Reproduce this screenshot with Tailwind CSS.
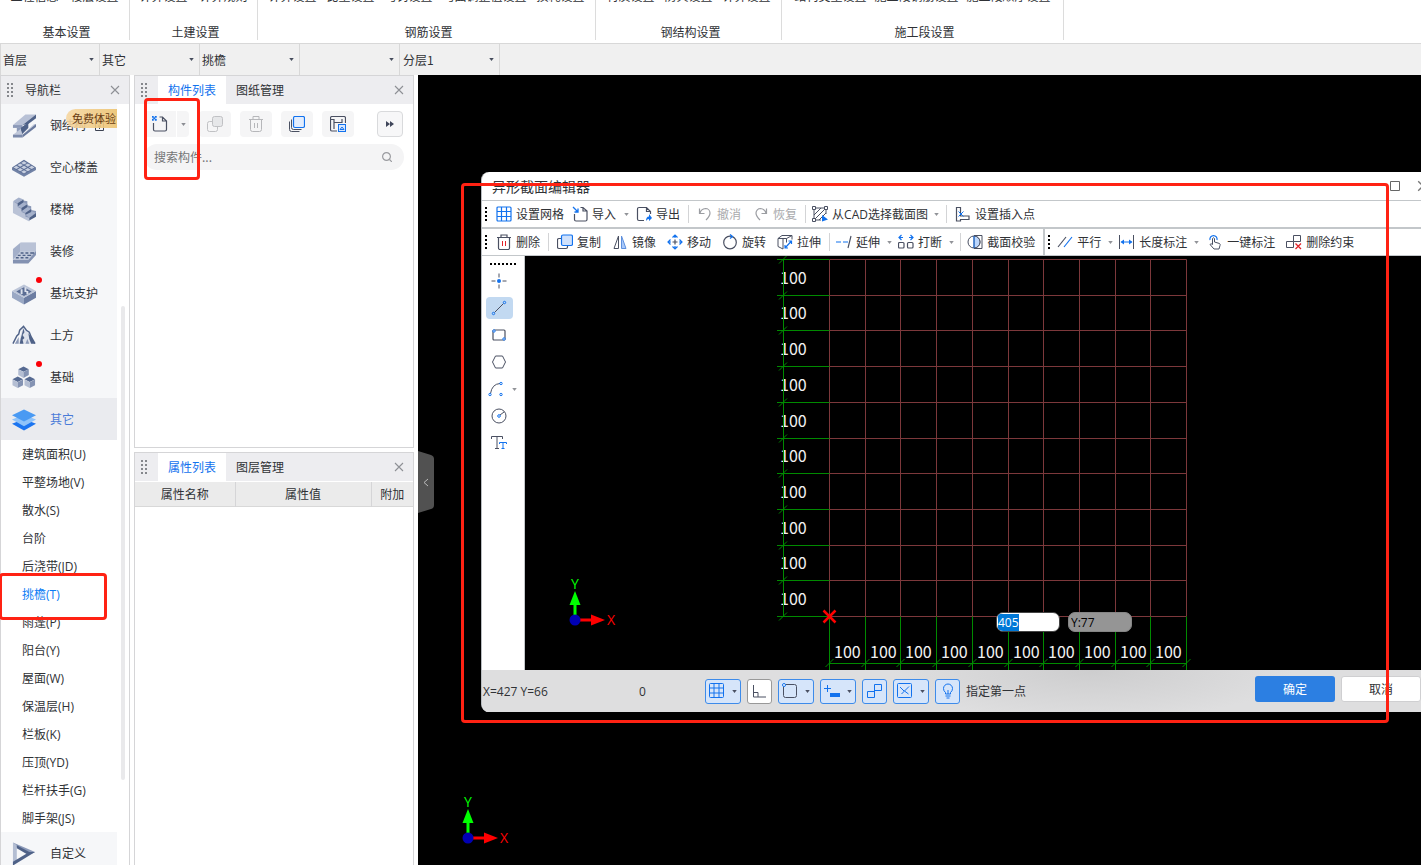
<!DOCTYPE html>
<html lang="zh-CN">
<head>
<meta charset="utf-8">
<title>异形截面编辑器</title>
<script src="https://cdn.jsdelivr.net/npm/@tailwindcss/browser@4"></script>
</head>
<body class="h-screen overflow-hidden bg-white font-['Noto_Sans_CJK_SC',sans-serif] text-xs text-[#303236]">
<svg class="hidden">
  <symbol id="caret" viewBox="0 0 6 4"><path d="M0 0h6L3 4z" fill="currentColor"/></symbol>
  <symbol id="close" viewBox="0 0 10 10"><path d="M1 1l8 8M9 1l-8 8" stroke="currentColor" stroke-width="1.1"/></symbol>
  <symbol id="grip" viewBox="0 0 6 14"><path d="M0 0h2v2H0zM4 0h2v2H4zM0 4h2v2H0zM4 4h2v2H4zM0 8h2v2H0zM4 8h2v2H4zM0 12h2v2H0zM4 12h2v2H4z" fill="#85878c"/></symbol>
  <symbol id="vdots" viewBox="0 0 2 14"><path d="M0 0h2v2H0zM0 4h2v2H0zM0 8h2v2H0zM0 12h2v2H0z" fill="#000"/></symbol>
</svg>

<div class="relative flex h-full flex-col">
  <!-- ribbon -->
  <header class="flex h-[43px] shrink-0 overflow-hidden">
    <section class="flex h-10 w-[130px] flex-col justify-between border-r border-[#dcdcdc]"><div class="-mt-3 flex justify-center gap-3 leading-4 whitespace-nowrap"><span>工程信息</span><span>楼层设置</span></div><h2 class="pl-1 text-center leading-4">基本设置</h2></section>
    <section class="flex h-10 w-[128px] flex-col justify-between border-r border-[#dcdcdc]"><div class="-mt-3 flex justify-center gap-3 leading-4 whitespace-nowrap"><span>计算设置</span><span>计算规则</span></div><h2 class="pl-1 text-center leading-4">土建设置</h2></section>
    <section class="flex h-10 w-[338px] flex-col justify-between border-r border-[#dcdcdc]"><div class="-mt-3 flex justify-center gap-2.5 leading-4 whitespace-nowrap"><span>计算设置</span><span>比重设置</span><span>弯钩设置</span><span>弯曲调整值设置</span><span>损耗设置</span></div><h2 class="pl-1 text-center leading-4">钢筋设置</h2></section>
    <section class="flex h-10 w-[186px] flex-col justify-between border-r border-[#dcdcdc]"><div class="-mt-3 flex justify-center gap-2.5 leading-4 whitespace-nowrap"><span>材质设置</span><span>防火设置</span><span>计算设置</span></div><h2 class="pl-1 text-center leading-4">钢结构设置</h2></section>
    <section class="flex h-10 w-[282px] flex-col justify-between border-r border-[#dcdcdc]"><div class="-mt-3 flex justify-center gap-2 leading-4 whitespace-nowrap"><span>结构类型设置</span><span>施工段钢筋设置</span><span>施工段顺序设置</span></div><h2 class="pl-1 text-center leading-4">施工段设置</h2></section>
  </header>

  <!-- context selectors -->
  <div class="flex h-8 shrink-0 border-t border-l border-[#d8d8d8] bg-[#f0f0f0]">
    <div class="relative flex w-[99px] items-center border-r border-[#d8d8d8]"><select aria-label="楼层" class="h-full w-full appearance-none pl-0.5"><option>首层</option></select><svg class="pointer-events-none absolute right-[5px] h-[3px] w-[5px] text-[#444b5c]"><use href="#caret"/></svg></div>
    <div class="relative flex w-[100px] items-center border-r border-[#d8d8d8]"><select aria-label="构件类别" class="h-full w-full appearance-none pl-0.5"><option>其它</option></select><svg class="pointer-events-none absolute right-[5px] h-[3px] w-[5px] text-[#444b5c]"><use href="#caret"/></svg></div>
    <div class="relative flex w-[100px] items-center border-r border-[#d8d8d8]"><select aria-label="构件类型" class="h-full w-full appearance-none pl-0.5"><option>挑檐</option></select><svg class="pointer-events-none absolute right-[5px] h-[3px] w-[5px] text-[#444b5c]"><use href="#caret"/></svg></div>
    <div class="relative flex w-[100px] items-center border-r border-[#d8d8d8]"><select aria-label="构件" class="h-full w-full appearance-none pl-0.5"><option></option></select><svg class="pointer-events-none absolute right-[5px] h-[3px] w-[5px] text-[#444b5c]"><use href="#caret"/></svg></div>
    <div class="relative flex w-[100px] items-center border-r border-[#d8d8d8]"><select aria-label="分层" class="h-full w-full appearance-none pl-[3px]"><option>分层1</option></select><svg class="pointer-events-none absolute right-[5px] h-[3px] w-[5px] text-[#444b5c]"><use href="#caret"/></svg></div>
  </div>

  <div class="flex min-h-0 flex-1">
    <!-- navigation -->
    <nav class="mr-1 flex w-[130px] shrink-0 flex-col border-x border-t border-[#d5d5d7]">
      <div class="flex h-7 shrink-0 items-center bg-[#ededf0] pl-1.5"><svg class="h-3.5 w-1.5"><use href="#grip"/></svg><h2 class="ml-3 flex-1">导航栏</h2><button aria-label="关闭导航栏" class="mr-[9px] text-[#8e9095]"><svg class="h-2.5 w-2.5"><use href="#close"/></svg></button></div>
      <div class="flex min-h-0 flex-1 overflow-hidden">
        <div class="w-[116px] shrink-0">
          <a href="#" class="relative flex h-[42px] items-center gap-3.5 bg-[#f6f7f9] pl-[11px]">
            <svg class="mt-0.5 h-7 w-6" viewBox="0 0 25 28"><path d="M1 13L14 2h11L11 13z" fill="#b8c1d6"/><path d="M1 13h10v3H1z" fill="#8b99b8"/><path d="M11 13L25 2v4l-8 6z" fill="#4f6288"/><path d="M5 16h4v6H5z" fill="#8b99b8"/><path d="M9 16l8-6v6l-7 7z" fill="#4f6288"/><path d="M1 23L9 17l2 6 12-11h2L11 23z" fill="#c0c8da"/><path d="M1 23h10v3H1z" fill="#7c8bac"/><path d="M11 23L25 12v3L11 26z" fill="#6a7a9e"/></svg><span>钢结构</span>
            <svg class="absolute top-[14px] left-[93px] h-3.5 w-3" viewBox="0 0 12 14" fill="none" stroke="#3c4252"><path d="M1.500 4.500h8v8h-8zM3.500 4V2h4v2M5.500 8v3"/><circle cx="5.500" cy="8" r="1"/></svg>
            <span class="absolute top-[5px] left-[65px] h-[19px] w-[51px] overflow-hidden rounded-l-full bg-linear-to-r from-[#f6d7a2]/90 to-[#edc36f]/90 pl-1.5 text-[11px] leading-[19px] whitespace-nowrap text-[#683b12]">免费体验</span>
          </a>
          <a href="#" class="flex h-[42px] items-center gap-3.5 bg-[#f6f7f9] pl-[11px]">
            <svg class="mt-0.5 h-7 w-6" viewBox="0 0 25 28"><path d="M12.500 7L25 14v2l-12.500 7L0 16v-2z" fill="#7182a6"/><path d="M12.500 5.500L25 13.500l-12.500 7L0 13.500z" fill="#5c6e96"/><g fill="#c7cfdf"><path d="M12.500 7l3 1.700-3 1.700-3-1.700zM8.500 9.300l3 1.700-3 1.700-3-1.700zM16.500 9.300l3 1.700-3 1.700-3-1.700zM4.500 11.700l3 1.700-3 1.700-3-1.700zM12.500 11.700l3 1.700-3 1.700-3-1.700zM20.500 11.700l3 1.700-3 1.700-3-1.700zM8.500 14l3 1.700-3 1.700-3-1.700zM16.500 14l3 1.700-3 1.700-3-1.700zM12.500 16.300l3 1.700-3 1.700-3-1.700z"/></g></svg><span>空心楼盖</span></a>
          <a href="#" class="flex h-[42px] items-center gap-3.5 bg-[#f6f7f9] pl-[11px]">
            <svg class="mt-0.5 h-7 w-6" viewBox="0 0 25 28"><path d="M2 5l0 11 16 9V21l7-3v-3l-5-1v-4l-4-1V5l-4-1z" fill="#8b99b8"/><path d="M1 5l5 3v3l4 2v3l4 2v3l4 1v4L1 17z" fill="#b9c2d6"/><path d="M1 5l6-4 5 2-6 4zM6 10l6-4 4 2-6 4zM10 15l6-4 4 2-6 4zM14 19l6-4 5 2-7 5z" fill="#a5b1cb"/><path d="M6 7l6-4v3l-6 4zM10 12l6-4v3l-6 4zM14 17l6-4v3l-6 3zM18 22l7-5v4l-7 4z" fill="#4f6288"/></svg><span>楼梯</span></a>
          <a href="#" class="flex h-[42px] items-center gap-3.5 bg-[#f6f7f9] pl-[11px]">
            <svg class="mt-0.5 h-7 w-6" viewBox="0 0 25 28"><path d="M9 4h16v13H9z" fill="#b9c2d6"/><path d="M1 11L9 4v10l-8 8z" fill="#a3afc9"/><path d="M9 13h16L17 22H1z" fill="#c2cadb"/><path d="M1 22h16l8-9v4l-8 9H1z" fill="#8492b2"/><path d="M9 15h3M14 15h3M19 15h4M6 17.500h3M11 17.500h3M16 17.500h4M4 20h3M9 20h3M14 20h3" stroke="#4f6288" stroke-width="1.400"/></svg><span>装修</span></a>
          <a href="#" class="relative flex h-[42px] items-center gap-3.5 bg-[#f6f7f9] pl-[11px]">
            <svg class="mt-0.5 h-7 w-6" viewBox="0 0 25 28"><path d="M0 11l12.500 7v7L0 18z" fill="#9aa8c4"/><path d="M25 11l-12.500 7v7L25 18z" fill="#6c7da2"/><path d="M12.500 4L25 11l-12.500 7L0 11z" fill="#bcc5d8"/><path d="M12.500 7l8 4.500-8 4.500-8-4.500z" fill="#5b6d94"/><path d="M9 9h2v5H9zM13 7h2v5h-2zM15 11h2v3h-2z" fill="#dce1ec"/></svg><span>基坑支护</span><i class="absolute top-[5px] left-[35px] h-1.5 w-1.5 rounded-full bg-[#fb0007]"></i></a>
          <a href="#" class="flex h-[42px] items-center gap-3.5 bg-[#f6f7f9] pl-[11px]">
            <svg class="mt-0.5 h-7 w-6" viewBox="0 0 25 28"><path d="M11 5l4 3 8 14H7z" fill="#dfe3ec"/><path d="M1 22l4-8 2-2 1-4 4-4 3 4 3 2 2 5 4 7" fill="none" stroke="#4f6288" stroke-width="1.500"/><path d="M12 6l1 4-2 3 2 3-2 2 1 4H8l1-5zM17 11l3 4 4 7h-4l-2-5z" fill="#4f6288"/><path d="M3 22l4-7 0 7zM14 22l2-5 2 5z" fill="#8b99b8"/></svg><span>土方</span></a>
          <a href="#" class="relative flex h-[42px] items-center gap-3.5 bg-[#f6f7f9] pl-[11px]">
            <svg class="mt-0.5 h-7 w-6" viewBox="0 0 25 28"><g id="cube"><path d="M12 2l5.500 2.800L12 7.600 6.500 4.800z" fill="#566a92"/><path d="M6.500 5v6l5.500 3V7.800z" fill="#b4bed3"/><path d="M17.500 5v6L12 14V7.800z" fill="#8493b3"/></g><use href="#cube" x="-6" y="10.500"/><use href="#cube" x="6.500" y="10.500"/></svg><span>基础</span><i class="absolute top-[5px] left-[35px] h-1.5 w-1.5 rounded-full bg-[#fb0007]"></i></a>
          <a href="#" class="flex h-[42px] items-center gap-3.5 bg-[#eaebef] pl-[11px] text-[#4a7bd8]">
            <svg class="mt-0.5 h-7 w-6" viewBox="0 0 25 28"><path d="M0 18l12.500-5L25 18l-12.500 7z" fill="#1c75f0"/><path d="M0 13.500l12.500-5 12.500 5-12.500 7z" fill="#8fc3fa"/><path d="M12.500 3L25 9l-12.500 6.500L0 9z" fill="#4a9af3"/></svg><span>其它</span></a>
          <ul class="-mb-px pt-px pl-[21px] font-['Open_Sans','Noto_Sans_CJK_SC',sans-serif] leading-7 whitespace-nowrap">
            <li><a href="#">建筑面积(U)</a></li><li><a href="#">平整场地(V)</a></li><li><a href="#">散水(S)</a></li><li><a href="#">台阶</a></li><li><a href="#">后浇带(JD)</a></li><li><a href="#" class="text-[#0a7cf5]">挑檐(T)</a></li><li><a href="#">雨蓬(P)</a></li><li><a href="#">阳台(Y)</a></li><li><a href="#">屋面(W)</a></li><li><a href="#">保温层(H)</a></li><li><a href="#">栏板(K)</a></li><li><a href="#">压顶(YD)</a></li><li><a href="#">栏杆扶手(G)</a></li><li><a href="#">脚手架(JS)</a></li>
          </ul>
          <a href="#" class="flex h-[42px] items-center gap-3.5 bg-[#f6f7f9] pl-[11px]">
            <svg class="mt-0.5 h-7 w-6" viewBox="0 0 25 28"><path d="M1 2l23 10-4 2L5 7z" fill="#8b99b8"/><path d="M1 2l4 3v15l-4 6z" fill="#b4bed3"/><path d="M24 12L1 26v-4l17-10z" fill="#4f6288"/><path d="M5 5l13 7-1 3L5 8z" fill="#4f6288"/></svg><span>自定义</span></a>
        </div>
        <div class="mt-[202px] ml-1 h-[474px] w-1 rounded-full bg-[#e9e9eb]"></div>
      </div>
    </nav>

    <!-- component and property panels -->
    <aside class="mr-1 flex w-[280px] shrink-0 flex-col gap-1">
      <section class="h-[373px] shrink-0 border border-[#d5d5d7]">
        <div class="flex h-7 items-center bg-[#ededf0] pl-1.5"><svg class="h-3.5 w-1.5"><use href="#grip"/></svg><button class="ml-[11px] h-7 bg-white px-2.5 text-[#1272ee]">构件列表</button><button class="h-7 px-2.5">图纸管理</button><button aria-label="关闭构件列表" class="mr-[9px] ml-auto text-[#8e9095]"><svg class="h-2.5 w-2.5"><use href="#close"/></svg></button></div>
        <div class="flex h-10 items-center pr-2.5 pl-[9px]">
          <button aria-label="新建" class="flex h-[26px] w-8 items-center justify-center rounded-l bg-[#f5f5f6]"><svg class="h-4 w-4" viewBox="0 0 16 16" fill="none" stroke="#4a5062"><path d="M1.500 7v6.500A1.500 1.500 0 003 15h10a1.500 1.500 0 001.500-1.500V5l-4-4H7.500M10.500 1v4h4" stroke-width="1.200"/><path d="M0 0h1.500v1.500H0zM3 0h1.500v1.500H3zM1.500 1.500H3V3H1.500zM0 3h1.500v1.500H0zM3 3h1.500v1.500H3z" fill="#1272ee" stroke="#1272ee" stroke-width=".4"/></svg></button>
          <button aria-label="新建选项" class="ml-px flex h-[26px] w-3 items-center justify-center rounded-r bg-[#f5f5f6] text-[#8b8d93]"><svg class="h-[3px] w-[5px]"><use href="#caret"/></svg></button>
          <button aria-label="复制" class="ml-2.5 flex h-[26px] w-8 items-center justify-center rounded bg-[#f5f5f6]"><svg class="h-4 w-4" viewBox="0 0 16 16" stroke="#c0c1c4"><rect x=".5" y="5.500" width="10" height="10" rx="2" fill="none"/><rect x="5.500" y=".5" width="10" height="10" rx="2" fill="#e6e7e9"/></svg></button>
          <button aria-label="删除" class="ml-[9px] flex h-[26px] w-8 items-center justify-center rounded bg-[#f5f5f6]"><svg class="h-4 w-4" viewBox="0 0 16 16" fill="none" stroke="#b6b7ba"><path d="M1 3.500h14M5 3.500v-3h6v3M2.500 3.500v10a2 2 0 002 2h7a2 2 0 002-2v-10M6.500 7v5M9.500 7v5"/></svg></button>
          <button aria-label="层间复制" class="ml-[9px] flex h-[26px] w-8 items-center justify-center rounded bg-[#f5f5f6]"><svg class="h-4 w-4" viewBox="0 0 16 16" fill="none" stroke="#4a5062"><path d="M.5 5.500v8a2 2 0 002 2h8M2.500 3.500v8a2 2 0 002 2h8"/><rect x="4.500" y=".5" width="11" height="11" rx="1.500" fill="#e3edfd" stroke="#1272ee" stroke-width="1.200"/></svg></button>
          <button aria-label="存档" class="ml-[9px] flex h-[26px] w-8 items-center justify-center rounded bg-[#f5f5f6]"><svg class="h-4 w-4" viewBox="0 0 16 16" fill="none" stroke="#4a5062"><path d="M7 15H2A1.500 1.500 0 01.5 13.500V2A1.500 1.500 0 012 .5h12A1.500 1.500 0 0115.500 2v5M4 3v10M12 3v4M4 6.500h8M1 3.500h3" stroke-width="1.200"/><rect x="8.500" y="8.500" width="7" height="7" stroke="#1272ee" fill="#d9e7fd"/><path d="M10 13.500l2-2.500 2 2.500z" stroke="#1272ee"/></svg></button>
          <button aria-label="更多" class="ml-auto flex h-[26px] w-[26px] items-center justify-center rounded border border-[#d9dadc] bg-[#f7f7f8]"><svg class="h-2 w-2" viewBox="0 0 8 8" fill="#40465a"><path d="M0 1l4 3-4 3zM4 1l4 3-4 3z"/></svg></button>
        </div>
        <label class="mr-[9px] ml-[9px] flex h-[26px] items-center rounded-full bg-[#f4f4f5] pr-3 pl-2.5"><input type="text" aria-label="搜索构件" placeholder="搜索构件..." class="min-w-0 flex-1 outline-none placeholder:text-[#757575]"><svg class="h-2.5 w-2.5" viewBox="0 0 10 10" fill="none" stroke="#9b9ca0" stroke-width="1.200"><circle cx="4.500" cy="4.500" r="3.900"/><path d="M7.500 7.500L10 10"/></svg></label>
      </section>
      <section class="flex-1 border border-b-0 border-[#d5d5d7]">
        <div class="flex h-7 items-center bg-[#ededf0] pl-1.5"><svg class="h-3.5 w-1.5"><use href="#grip"/></svg><button class="ml-[11px] h-7 bg-white px-2.5 text-[#1272ee]">属性列表</button><button class="h-7 px-2.5">图层管理</button><button aria-label="关闭属性列表" class="mr-[9px] ml-auto text-[#8e9095]"><svg class="h-2.5 w-2.5"><use href="#close"/></svg></button></div>
        <table class="mt-px w-full table-fixed border-collapse">
          <thead><tr class="h-6 border-b border-[#d8d8d8] bg-[#ebebeb]"><th class="w-[100px] border-r border-[#d5d5d7] font-normal">属性名称</th><th class="border-r border-[#d5d5d7] font-normal">属性值</th><th class="w-[42px] font-normal">附加</th></tr></thead>
        </table>
      </section>
    </aside>

    <!-- drawing area -->
    <main class="relative min-w-0 flex-1 overflow-hidden bg-black">
      <button aria-label="收起面板" class="absolute top-[376px] left-0 h-[62px] w-4"><svg class="h-full w-full" viewBox="0 0 16 62"><path d="M0 0l13 4q3 1 3 4v46q0 3-3 4L0 62z" fill="#515151"/><path d="M10 28l-4 3.500 4 3.500" fill="none" stroke="#bbb"/></svg></button>
      <svg class="absolute top-[718px] left-10 h-14 w-14 font-['Open_Sans',sans-serif]" viewBox="0 0 56 56"><g id="ucs"><path d="M10 45V28" stroke="#0f0" stroke-width="3"/><path d="M4.500 30L10 16l5.500 14z" fill="#0f0"/><path d="M10 45h18" stroke="#f00" stroke-width="3"/><path d="M26 39.500L40 45l-14 5.500z" fill="#f00"/><circle cx="10" cy="45" r="5.500" fill="#0000b4"/><text x="10" y="14" text-anchor="middle" font-size="14" fill="#0f0">Y</text><text x="46" y="50" text-anchor="middle" font-size="14" fill="#f00">X</text></g></svg>

      <section role="dialog" aria-labelledby="dlg" class="absolute top-[97px] -right-2 left-[63px] flex h-[540px] flex-col overflow-hidden rounded-lg border-l border-[#b9bdc1] bg-white whitespace-nowrap">
        <div class="flex h-7 shrink-0 items-center pl-2.5"><h1 id="dlg" class="flex-1 text-sm">异形截面编辑器</h1><button aria-label="最大化" class="mr-[17px]"><svg class="h-2.5 w-2.5" viewBox="0 0 10 10"><path d="M.5.5h9v9h-9z" fill="none" stroke="#666"/></svg></button><button aria-label="关闭" class="text-[#777]"><svg class="h-3 w-3"><use href="#close"/></svg></button></div>

        <div class="flex h-[27px] shrink-0 items-center border-t border-[#c3c7ca] pl-[3px]">
          <svg class="mr-[9px] h-3.5 w-0.5"><use href="#vdots"/></svg>
          <button class="flex items-center gap-1"><svg class="h-4 w-4" viewBox="0 0 16 16" fill="none" stroke="#1272ee" stroke-width="1.200"><rect x="1" y="1" width="14" height="14" rx="1"/><path d="M1 5.500h14M1 10.500h14M5.500 1v14M10.500 1v14"/></svg>设置网格</button>
          <button class="ml-2 flex items-center gap-1"><svg class="h-4 w-4" viewBox="0 0 16 16" fill="none" stroke="#4a5062"><path d="M2.500 8v5.500a1.500 1.500 0 001.500 1.500h9.500a1.500 1.500 0 001.500-1.500V5l-4-3.500H8.500M11 1.500V5h4" stroke-width="1.200"/><path d="M1 1l4.500 4.500M2.500 6H6V2.500" stroke="#1272ee" stroke-width="1.300"/></svg>导入</button>
          <button aria-label="导入选项" class="flex w-5 justify-center text-[#919398]"><svg class="h-[3px] w-[5px]"><use href="#caret"/></svg></button>
          <button class="flex items-center gap-1"><svg class="h-4 w-4" viewBox="0 0 16 16" fill="none" stroke="#4a5062"><path d="M8 14.500H3A1.500 1.500 0 011.500 13V3A1.500 1.500 0 013 1.500h7.500l4 4V8M10.500 1.500v4h4" stroke-width="1.200"/><path d="M10 15q0-4.500 3-4.500V8l3 4-3 3v-2q-2 0-3 2z" fill="#1272ee" stroke="none"/></svg>导出</button>
          <i class="ml-2 h-[18px] w-px bg-[#d3d4d6]"></i>
          <button class="ml-2 flex items-center gap-1 text-[#a9aaad]"><svg class="h-4 w-4" viewBox="0 0 16 16" fill="none" stroke="#9b9da2"><path d="M2.500 2.500v5h5M3 7q1-4 5.500-4.500a4.500 4.500 0 014.500 4.500q0 3-4 7" stroke-width="1.200"/></svg>撤消</button>
          <button class="ml-3 flex items-center gap-1 text-[#a9aaad]"><svg class="h-4 w-4" viewBox="0 0 16 16" fill="none" stroke="#9b9da2"><path d="M13.500 2.500v5h-5M13 7Q12 3 7.500 2.500A4.500 4.500 0 003 7q0 3 4 7" stroke-width="1.200"/></svg>恢复</button>
          <i class="ml-2 h-[18px] w-px bg-[#d3d4d6]"></i>
          <button class="ml-1.5 flex items-center gap-1"><svg class="h-4 w-4" viewBox="0 0 16 16" fill="none" stroke="#4a5062"><path d="M2 2h12v6M2 2v12h7M2 9l7-7M2 14L14 2M7 14l7-7"/><path d="M.5.5h3v3h-3zM12.500.5h3v3h-3zM.5 12.500h3v3h-3z" fill="#fff"/><path d="M10 9l6 4.500-6 2z" fill="#1272ee" stroke="none"/></svg><span>从<span class="font-['Open_Sans']">CAD</span>选择截面图</span></button>
          <button aria-label="选择选项" class="flex w-[18px] justify-center text-[#919398]"><svg class="h-[3px] w-[5px]"><use href="#caret"/></svg></button>
          <i class="h-[18px] w-px bg-[#d3d4d6]"></i>
          <button class="ml-2 flex items-center gap-1"><svg class="h-4 w-4" viewBox="0 0 16 16" fill="none" stroke="#4a5062"><path d="M1.500 1.500h4v8.500h8.500v3.500H5.500V15h-4z" stroke-width="1.200"/><path d="M3.500 5.500l5 5M8.500 5.500l-5 5" stroke="#1272ee"/></svg>设置插入点</button>
        </div>

        <div class="flex h-[29px] shrink-0 items-center border-t-2 border-b border-[#c3c7ca] pl-[3px]">
          <svg class="mr-[9px] h-3.5 w-0.5"><use href="#vdots"/></svg>
          <button class="flex items-center gap-1"><svg class="h-4 w-4" viewBox="0 0 16 16" fill="none" stroke="#4a5062"><path d="M1 3.500h14M5 3.500v-2.500h6v2.500M2.500 3.500V14a1.500 1.500 0 001.500 1.500h8a1.500 1.500 0 001.500-1.500V3.500" stroke-width="1.200"/><path d="M6.500 7v5M9.500 7v5" stroke="#e2222a"/></svg>删除</button>
          <i class="ml-2 h-[18px] w-px bg-[#d3d4d6]"></i>
          <button class="ml-2 flex items-center gap-1"><svg class="h-4 w-4" viewBox="0 0 16 16" fill="none" stroke="#4a5062" stroke-width="1.200"><path d="M4 4.500H2A1.500 1.500 0 00.5 6v7A1.500 1.500 0 002 14.500h7a1.500 1.500 0 001.500-1.500v-1"/><rect x="4.500" y="1" width="11" height="10.500" rx="1.500" stroke="#1272ee" fill="#cfe1fc"/></svg>复制</button>
          <button class="ml-[11px] flex items-center gap-1"><svg class="h-4 w-4" viewBox="0 0 16 16" fill="none" stroke="#4a5062"><path d="M6.500 2v12.500H2z"/><path d="M9.500 2v12.500H14z" fill="#a9c9fa" stroke="#5d8fdd"/></svg>镜像</button>
          <button class="ml-[11px] flex items-center gap-1"><svg class="h-4 w-4" viewBox="0 0 16 16" fill="none" stroke="#1272ee" stroke-width="1.200"><path d="M5.500 3.500L8 1l2.500 2.500M5.500 12.500L8 15l2.500-2.500M3.500 5.500L1 8l2.500 2.500M12.500 5.500L15 8l-2.500 2.500M8 1v3M8 12v3M1 8h3M12 8h3"/><path d="M8 5.500v5M5.500 8h5" stroke="#4a5062"/></svg>移动</button>
          <button class="ml-[11px] flex items-center gap-1"><svg class="h-4 w-4" viewBox="0 0 16 16" fill="none" stroke="#4a5062"><circle cx="8" cy="8.500" r="6.300" stroke-width="1.200"/><path d="M8 .5l2.500 2L8 4.500" stroke="#1272ee" stroke-width="1.300"/></svg>旋转</button>
          <button class="ml-[11px] flex items-center gap-1"><svg class="h-4 w-4" viewBox="0 0 16 16" fill="none" stroke="#4a5062"><path d="M6 15V4.500M1 4.500h8.500v4M1 4.500v8L6 15M1 4.500l4-3h10l-5.500 3M15 1.500v4"/><path d="M8 14l6.500-7M11.500 7h3v3M8 11v3h3" stroke="#1272ee" stroke-width="1.200"/></svg>拉伸</button>
          <i class="ml-2 h-[18px] w-px bg-[#d3d4d6]"></i>
          <button class="ml-1.5 flex items-center gap-1"><svg class="h-4 w-4" viewBox="0 0 16 16" fill="none" stroke-width="1.200"><path d="M0 8h5M7 8h5" stroke="#1272ee"/><path d="M15 2l-3 12" stroke="#4a5062"/></svg>延伸</button>
          <button aria-label="延伸选项" class="flex w-[18px] justify-center text-[#919398]"><svg class="h-[3px] w-[5px]"><use href="#caret"/></svg></button>
          <button class="flex items-center gap-1"><svg class="h-4 w-4" viewBox="0 0 16 16" fill="none" stroke="#4a5062" stroke-width="1.200"><rect x=".5" y="8.500" width="5.500" height="5.500" rx="1"/><rect x="9.500" y="8.500" width="5.500" height="5.500" rx="1"/><path d="M3.500 1L1 3.500 3.500 6M1 3.500h4M12.500 1L15 3.500 12.500 6M15 3.500h-4" stroke="#1272ee"/></svg>打断</button>
          <button aria-label="打断选项" class="flex w-[18px] justify-center text-[#919398]"><svg class="h-[3px] w-[5px]"><use href="#caret"/></svg></button>
          <i class="h-[18px] w-px bg-[#d3d4d6]"></i>
          <button class="ml-1.5 flex items-center gap-1"><svg class="h-4 w-4" viewBox="0 0 16 16" fill="none" stroke="#4a5062"><path d="M7 1.500h8v13H7"/><circle cx="7" cy="8" r="6" fill="#fff"/><path d="M7 2a6 6 0 010 12z" fill="#bcd6fb"/><path d="M7 2v12" stroke="#1272ee"/></svg>截面校验</button>
          <div class="ml-2 flex h-[26px] items-center border-l-2 border-[#c3c7ca] pl-[3px]">
            <svg class="mr-[7px] h-3.5 w-0.5"><use href="#vdots"/></svg>
            <button class="flex items-center gap-1"><svg class="h-4 w-4" viewBox="0 0 16 16" stroke-width="1.200"><path d="M1 13L9 3" stroke="#4a5062"/><path d="M7 13l8-10" stroke="#1272ee"/></svg>平行</button>
            <button aria-label="平行选项" class="flex w-[18px] justify-center text-[#919398]"><svg class="h-[3px] w-[5px]"><use href="#caret"/></svg></button>
            <button class="flex items-center gap-1"><svg class="h-4 w-4" viewBox="0 0 16 16" fill="none"><path d="M.5 1v14M14.500 1v14" stroke="#4a5062"/><path d="M2.500 8h10" stroke="#1272ee" stroke-width="1.200"/><path d="M1.500 8L5 5.500v5zM13.500 8L10 5.500v5z" fill="#1272ee"/></svg>长度标注</button>
            <button aria-label="标注选项" class="flex w-[18px] justify-center text-[#919398]"><svg class="h-[3px] w-[5px]"><use href="#caret"/></svg></button>
            <button class="ml-0.5 flex items-center gap-1"><svg class="h-4 w-4" viewBox="0 0 16 16" fill="none" stroke="#4a5062"><path d="M5.500 10V4.500q1-1.500 2 0V8l5 1.500q1 .5.500 2l-1 3.500H7l-4-4.500q1-1.500 2.500 0z"/><path d="M3 6a3.600 3.600 0 117 0" stroke="#1272ee" stroke-width="1.200"/></svg>一键标注</button>
            <button class="ml-[11px] flex items-center gap-1"><svg class="h-4 w-4" viewBox="0 0 16 16" fill="none" stroke="#4a5062"><path d="M7.500 1.500h7v6h-7zM7.500 7.500h-7v6h7z"/><path d="M9.500 9.500l5.500 5.500M15 9.500L9.500 15" stroke="#e2222a" stroke-width="1.300"/></svg>删除约束</button>
          </div>
        </div>

        <div class="flex min-h-0 flex-1">
          <div class="flex w-[43px] shrink-0 flex-col gap-[5px] border-r border-[#c3c7ca] pl-1">
            <svg class="mt-[7px] ml-1 h-0.5 w-[26px]" viewBox="0 0 26 2"><path d="M0 1h26" stroke="#000" stroke-width="2" stroke-dasharray="2 2"/></svg>
            <button aria-label="点" class="flex h-[22px] w-[27px] items-center justify-center pr-0.5"><svg class="h-4 w-4" viewBox="0 0 16 16"><path d="M8 .5v4M8 11.500v4M.5 8h4M11.500 8h4" stroke="#4a5062"/><circle cx="8" cy="8" r="2" fill="#1272ee"/></svg></button>
            <button aria-label="直线" class="flex h-[22px] w-[27px] items-center justify-center rounded bg-[#c2d9f1] pr-0.5"><svg class="h-4 w-4" viewBox="0 0 16 16" fill="none" stroke="#1272ee"><path d="M3.500 12.500l9-9" stroke="#4a5062"/><circle cx="2.500" cy="13.500" r="1.200"/><circle cx="13.500" cy="2.500" r="1.200"/></svg></button>
            <button aria-label="矩形" class="flex h-[22px] w-[27px] items-center justify-center pr-0.5"><svg class="h-4 w-4" viewBox="0 0 16 16" fill="none" stroke="#1272ee"><rect x="2" y="3" width="12" height="10" rx="1" stroke="#4a5062" stroke-width="1.200"/><circle cx="3" cy="4" r="1.200" fill="#fff"/><circle cx="13" cy="12" r="1.200" fill="#fff"/></svg></button>
            <button aria-label="多边形" class="flex h-[22px] w-[27px] items-center justify-center pr-0.5"><svg class="h-4 w-4" viewBox="0 0 16 16" fill="none" stroke="#4a5062"><path d="M4.500 2h7L14.500 8l-3 6h-7l-3-6z"/></svg></button>
            <div class="flex items-center"><button aria-label="圆弧" class="flex h-[22px] w-[22px] items-center justify-center pr-0.5"><svg class="h-4 w-4" viewBox="0 0 16 16" fill="none" stroke="#1272ee"><path d="M2.500 12.500Q4 3 12 2.500" stroke="#4a5062"/><circle cx="2" cy="13.500" r="1.200"/><circle cx="13" cy="2.500" r="1.200"/><circle cx="13" cy="13.500" r="1.200"/></svg></button><button aria-label="圆弧选项" class="flex w-3 justify-center text-[#919398]"><svg class="h-[3px] w-[5px]"><use href="#caret"/></svg></button></div>
            <button aria-label="圆" class="flex h-[22px] w-[27px] items-center justify-center pr-0.5"><svg class="h-4 w-4" viewBox="0 0 16 16" fill="none" stroke="#4a5062"><circle cx="8" cy="8" r="7"/><path d="M9 7l4-3"/><circle cx="8" cy="8" r="1.300" stroke="#1272ee"/></svg></button>
            <button aria-label="文字" class="flex h-[22px] w-[27px] items-center justify-center pr-0.5"><svg class="h-4 w-4" viewBox="0 0 16 16" fill="none"><path d="M.5 4V1.500h11V4M6 1.500v12M4 13.500h4" stroke="#4a5062"/><path d="M8.500 9V7.500h7V9M12 7.500v6M10.500 13.500h3" stroke="#1272ee"/></svg></button>
          </div>
          <div class="relative min-w-0 flex-1 overflow-hidden bg-black">
            <svg class="absolute inset-0 h-full w-full">
              <g id="plan"></g>
              <g transform="translate(40 319)" class="font-['Open_Sans',sans-serif]"><use href="#ucs"/></g>
              <path d="M298.500 354.500l12 12M310.500 354.500l-12 12" stroke="#f00" stroke-width="2.500"/>
            </svg>
            <input id="xval" type="text" aria-label="X" value="405" class="absolute top-[356px] left-[471px] h-5 w-16 rounded-[7px] border border-[#444] bg-white px-px font-['Open_Sans'] leading-[18px] text-black outline-none selection:bg-[#0078d7] selection:text-white">
            <input type="text" aria-label="Y" value="Y:77" readonly class="absolute top-[356px] left-[543px] h-5 w-16 rounded-[7px] border border-[#858585] bg-[#959595] px-0.5 font-['Open_Sans'] leading-[18px] text-black outline-none">
          </div>
        </div>

        <footer class="flex h-[42px] shrink-0 items-center bg-[#dededf] bg-radial-[200px_50px_at_610px_0px] from-[#cdcdce] to-[#dededf] pr-2 pl-px">
          <output class="w-[156px] pt-0.5 font-['Open_Sans']">X=427 Y=66</output><output class="w-[66px] pt-0.5 font-['Open_Sans']">0</output>
          <div class="flex items-center gap-1.5">
            <button aria-label="栅格" class="flex h-[25px] w-9 items-center justify-between rounded-[3px] border border-[#3d8bea] bg-[#d6e5fa] pr-[3px] pl-[3px]"><svg class="h-4 w-4" viewBox="0 0 16 16" fill="none" stroke="#1272ee"><rect x=".5" y=".5" width="14" height="14" rx="1"/><path d="M.5 5h14M.5 10h14M5 .5v14M10 .5v14"/></svg><svg class="h-[3px] w-[5px] text-[#4a5062]"><use href="#caret"/></svg></button>
            <button aria-label="正交" class="flex h-[25px] w-[25px] items-center justify-center rounded-[3px] border border-[#999] bg-white"><svg class="h-4 w-4" viewBox="0 0 16 16" fill="none" stroke="#4a5062"><path d="M1.500 2v12H14M1.500 9.500H6V14"/></svg></button>
            <button aria-label="捕捉" class="flex h-[25px] w-9 items-center justify-between rounded-[3px] border border-[#3d8bea] bg-[#d6e5fa] pr-[3px] pl-[3px]"><svg class="h-4 w-4" viewBox="0 0 16 16" fill="none" stroke="#4a5062"><rect x="1.500" y="1.500" width="13" height="13" rx="2"/><circle cx="2" cy="2" r="1.500" fill="#fff" stroke="#1272ee"/></svg><svg class="h-[3px] w-[5px] text-[#4a5062]"><use href="#caret"/></svg></button>
            <button aria-label="动态输入" class="flex h-[25px] w-9 items-center justify-between rounded-[3px] border border-[#3d8bea] bg-[#d6e5fa] pr-[3px] pl-[3px]"><svg class="h-4 w-4" viewBox="0 0 16 16"><path d="M0 5.500h7M3.500 2v7" stroke="#1272ee"/><path d="M6 10h10v4H6z" fill="#1272ee"/></svg><svg class="h-[3px] w-[5px] text-[#4a5062]"><use href="#caret"/></svg></button>
            <button aria-label="约束" class="flex h-[25px] w-[25px] items-center justify-center rounded-[3px] border border-[#3d8bea] bg-[#d6e5fa]"><svg class="h-4 w-4" viewBox="0 0 16 16" fill="none" stroke="#1272ee"><path d="M7.500 1.500h7v6h-7zM.5 8.500h7v6h-7zM7.500 7v2"/></svg></button>
            <button aria-label="追踪" class="flex h-[25px] w-9 items-center justify-between rounded-[3px] border border-[#3d8bea] bg-[#d6e5fa] pr-[3px] pl-[3px]"><svg class="h-4 w-4" viewBox="0 0 16 16" fill="none" stroke="#1272ee"><rect x=".5" y=".5" width="14" height="14" rx="1"/><path d="M3 4l4 4M12 3.500L4.500 11M7.500 8l4 3"/></svg><svg class="h-[3px] w-[5px] text-[#4a5062]"><use href="#caret"/></svg></button>
            <button aria-label="提示" class="flex h-[25px] w-[25px] items-center justify-center rounded-[3px] border border-[#3d8bea] bg-[#d6e5fa]"><svg class="h-4 w-4" viewBox="0 0 16 16" fill="none" stroke="#1272ee"><path d="M5.500 11V9.500Q3.500 8 3.500 5.500a4.500 4.500 0 019 0q0 2.500-2 4V11zM5.500 13h5M6.500 15h3M8 11V7"/></svg></button>
            <span>指定第一点</span>
          </div>
          <div class="ml-auto flex gap-1.5 pb-1"><button class="h-[26px] w-20 rounded-[3px] bg-[#2c7fe2] text-white">确定</button><button class="h-[26px] w-20 rounded-[3px] border border-[#cfcfd1] bg-white">取消</button></div>
        </footer>
      </section>
    </main>
  </div>

  <!-- highlight frames -->
  <div class="pointer-events-none absolute top-[98px] left-[144px] h-[82px] w-14 rounded border-3 border-[#ff2213]"></div>
  <div class="pointer-events-none absolute top-[573px] -left-px h-[47px] w-[108px] rounded border-3 border-[#ff2213]"></div>
  <div class="pointer-events-none absolute top-[183px] right-8 left-[461px] h-[540px] rounded border-3 border-[#ff2213]"></div>
</div>

<script>
  // Section grid: 10 x 10 cells of 100 mm, dimension chains on the left and at the bottom.
  const step = 35.7, x0 = 304.5, y0 = 360.5, n = 10;
  const line = (a, b, c, d, col) => `<path d="M${a} ${b}L${c} ${d}" stroke="${col}"/>`;
  const label = (x, y) => `<text x="${x}" y="${y}" font-size="16" fill="#f2f2f2">100</text>`;
  const red = '#7c383b', green = '#008a00';
  let out = '';
  for (let i = 0; i <= n; i++) {
    const x = Math.floor(x0 + i * step) + .5, y = Math.floor(y0 - i * step) + .5;
    out += line(x, 3.5, x, y0, red) + line(x0, y, 661.5, y, red);
    out += line(252, y, x0, y, green) + line(254, y + 4, 262, y - 4, green);
    out += line(x, y0, x, 414, green) + line(x - 4, 411, x + 4, 403, green);
    if (i < n) out += label(255, Math.round(y - 12)) + label(Math.round(x + 4), 402);
  }
  out += line(258.5, 3.5, 258.5, y0, green) + line(x0, 407.5, 661.5, 407.5, green);
  document.getElementById('plan').innerHTML = out;
  const field = document.getElementById('xval');
  field.focus();
  field.select();
</script>
</body>
</html>
